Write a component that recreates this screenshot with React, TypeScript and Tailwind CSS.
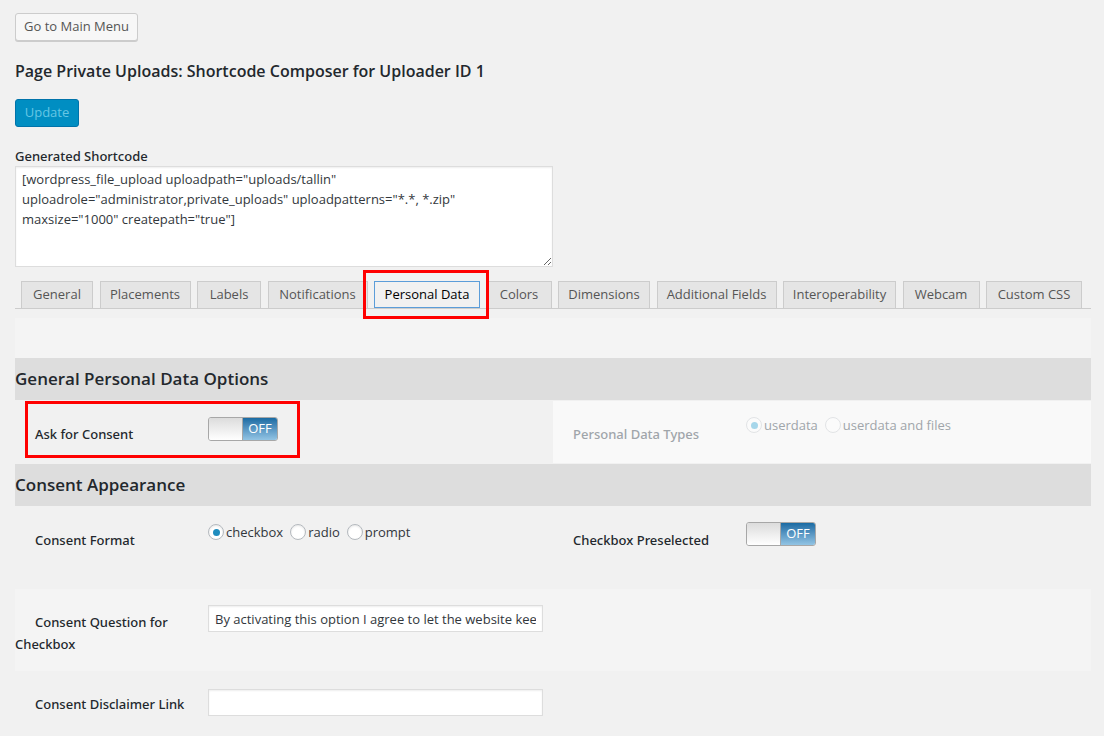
import React from 'react'

const tabs: { name: string; w: string; active?: boolean }[] = [
  { name: 'General', w: 'w-[72px]' },
  { name: 'Placements', w: 'w-[91px]' },
  { name: 'Labels', w: 'w-[64px]' },
  { name: 'Notifications', w: 'w-[100px]' },
  { name: 'Personal Data', w: 'w-[106px]', active: true },
  { name: 'Colors', w: 'w-[65px]' },
  { name: 'Dimensions', w: 'w-[92px]' },
  { name: 'Additional Fields', w: 'w-[120px]' },
  { name: 'Interoperability', w: 'w-[113px]' },
  { name: 'Webcam', w: 'w-[77px]' },
  { name: 'Custom CSS', w: 'w-[96px]' },
]

function Toggle() {
  return (
    <div className="flex h-[24px] w-[70px] overflow-hidden rounded-[3px] border border-[#a7a7a7]">
      <div className="w-[34px] border-r border-[#a7a7a7] bg-gradient-to-b from-[#dcdcdc] to-white" />
      <div className="flex flex-1 items-center justify-center bg-gradient-to-b from-[#186ba3] to-[#92c4e4] text-[13px] text-white">
        OFF
      </div>
    </div>
  )
}

function Radio({ label, checked, disabled }: { label: string; checked?: boolean; disabled?: boolean }) {
  return (
    <div className="mr-[7px] flex items-center">
      <span
        className={
          disabled
            ? 'flex h-4 w-4 items-center justify-center rounded-full border border-[#e2e4e6] bg-[#fbfbfb]'
            : 'flex h-4 w-4 items-center justify-center rounded-full border border-[#b4b9be] bg-white shadow-[inset_0_1px_2px_rgba(0,0,0,0.1)]'
        }
      >
        {checked && (
          <span className={disabled ? 'h-[7px] w-[7px] rounded-full bg-[#a6d6ea]' : 'h-[7px] w-[7px] rounded-full bg-[#1e8cbe]'} />
        )}
      </span>
      <span className={disabled ? 'ml-[2px] text-[#a0a5aa]' : 'ml-[2px] text-[#32373c]'}>{label}</span>
    </div>
  )
}

function Label({ children, muted }: { children: React.ReactNode; muted?: boolean }) {
  return (
    <div
      className={
        muted
          ? "w-[193px] shrink-0 pt-[22px] indent-5 font-['Noto_Sans',sans-serif] text-[13px] leading-[22px] font-medium text-[#a0a5aa]"
          : "w-[193px] shrink-0 pt-[22px] indent-5 font-['Noto_Sans',sans-serif] text-[13px] leading-[22px] font-medium text-[#23282d]"
      }
    >
      {children}
    </div>
  )
}

function SectionHeader({ title }: { title: string }) {
  return (
    <div className="flex h-[42px] items-center bg-[#dddddd] text-[17px] font-semibold text-[#23282d]">{title}</div>
  )
}

export default function App() {
  return (
    <div className="min-h-screen bg-[#f1f1f1] pl-[15px] pr-[13px] pt-[13px] font-['Open_Sans',sans-serif] text-[13px] text-[#23282d]">
      <button className="h-[28px] w-[123px] rounded-[3px] border border-[#cccccc] bg-[#f7f7f7] text-[13px] text-[#555] shadow-[0_1px_0_#cccccc]">
        Go to Main Menu
      </button>

      <h2 className="mt-[19px] text-[16px] leading-[22px] font-semibold text-[#23282d]">
        Page Private Uploads: Shortcode Composer for Uploader ID 1
      </h2>

      <button className="mt-[17px] h-[28px] w-[64px] rounded-[3px] border border-[#0073aa] bg-[#008ec2] text-[13px] text-[#66c6e4]">
        Update
      </button>

      <div className="mt-[20px] font-['Noto_Sans',sans-serif] text-[13px] leading-[18px] font-medium">Generated Shortcode</div>
      <textarea
        readOnly
        className="mt-[1px] block h-[101px] w-[538px] resize-y border border-[#dddddd] bg-white px-[6px] py-[2px] text-[13px] leading-[20px] text-[#32373c] shadow-[inset_0_1px_2px_rgba(0,0,0,0.07)] outline-none"
        value={'[wordpress_file_upload uploadpath="uploads/tallin" uploadrole="administrator,private_uploads" uploadpatterns="*.*, *.zip" maxsize="1000" createpath="true"]'}
      />

      <div className="mt-[14px] flex w-[1076px] items-end gap-[6.5px] border-b border-[#cccccc] pl-[6px]">
        {tabs.map((t) =>
          t.active ? (
            <div key={t.name} className="relative">
              <div
                className={`${t.w} flex h-[27px] items-center justify-center border border-[#5b9dd9] bg-[#f1f1f1] text-[13px] text-[#000]`}
              >
                {t.name}
              </div>
              <div className="absolute -left-[11px] -right-[9px] -top-[11px] -bottom-[11px] border-[3px] border-[#ff0000]" />
            </div>
          ) : (
            <div
              key={t.name}
              className={`${t.w} flex h-[27px] items-center justify-center border border-b-0 border-[#cccccc] bg-[#e5e5e5] text-[13px] text-[#555]`}
            >
              {t.name}
            </div>
          )
        )}
      </div>

      <div className="mt-[9px] w-[1076px]">
        <div className="h-[40px] bg-[#f4f4f4]" />
        <SectionHeader title="General Personal Data Options" />

        <div className="relative mt-[1px] flex h-[62px]">
          <div className="flex w-[538px]">
            <Label>Ask for Consent</Label>
            <div className="pt-[16px]">
              <Toggle />
            </div>
          </div>
          <div className="flex w-[538px] bg-[#f9f9f9]">
            <Label muted>Personal Data Types</Label>
            <div className="flex h-fit pt-[15px] leading-[18px]">
              <Radio label="userdata" checked disabled />
              <Radio label="userdata and files" disabled />
            </div>
          </div>
          <div className="absolute left-[10px] top-0 h-[57px] w-[275px] border-[3px] border-[#ff0000]" />
        </div>

        <div className="mt-[1px]">
          <SectionHeader title="Consent Appearance" />
        </div>

        <div className="mt-[1px] flex h-[81px]">
          <div className="flex w-[538px]">
            <Label>Consent Format</Label>
            <div className="flex h-fit pt-[16px] leading-[18px]">
              <Radio label="checkbox" checked />
              <Radio label="radio" />
              <Radio label="prompt" />
            </div>
          </div>
          <div className="flex w-[538px]">
            <Label>Checkbox Preselected</Label>
            <div className="pt-[15px]">
              <Toggle />
            </div>
          </div>
        </div>

        <div className="mt-[1px] flex h-[82px] bg-[#f4f4f4]">
          <div className="flex w-[538px]">
            <Label>
              Consent Question for
              <br />
              Checkbox
            </Label>
            <div className="pt-[16px]">
              <input
                readOnly
                className="h-[27px] w-[335px] border border-[#dddddd] bg-white px-[6px] text-[13px] text-[#32373c] shadow-[inset_0_1px_2px_rgba(0,0,0,0.07)] outline-none"
                value="By activating this option I agree to let the website keep my personal data"
              />
            </div>
          </div>
        </div>

        <div className="flex h-[66px]">
          <div className="flex w-[538px]">
            <Label>Consent Disclaimer Link</Label>
            <div className="pt-[18px]">
              <input
                readOnly
                className="h-[27px] w-[335px] border border-[#dddddd] bg-white px-[6px] text-[13px] text-[#32373c] shadow-[inset_0_1px_2px_rgba(0,0,0,0.07)] outline-none"
                value=""
              />
            </div>
          </div>
        </div>
      </div>
    </div>
  )
}
